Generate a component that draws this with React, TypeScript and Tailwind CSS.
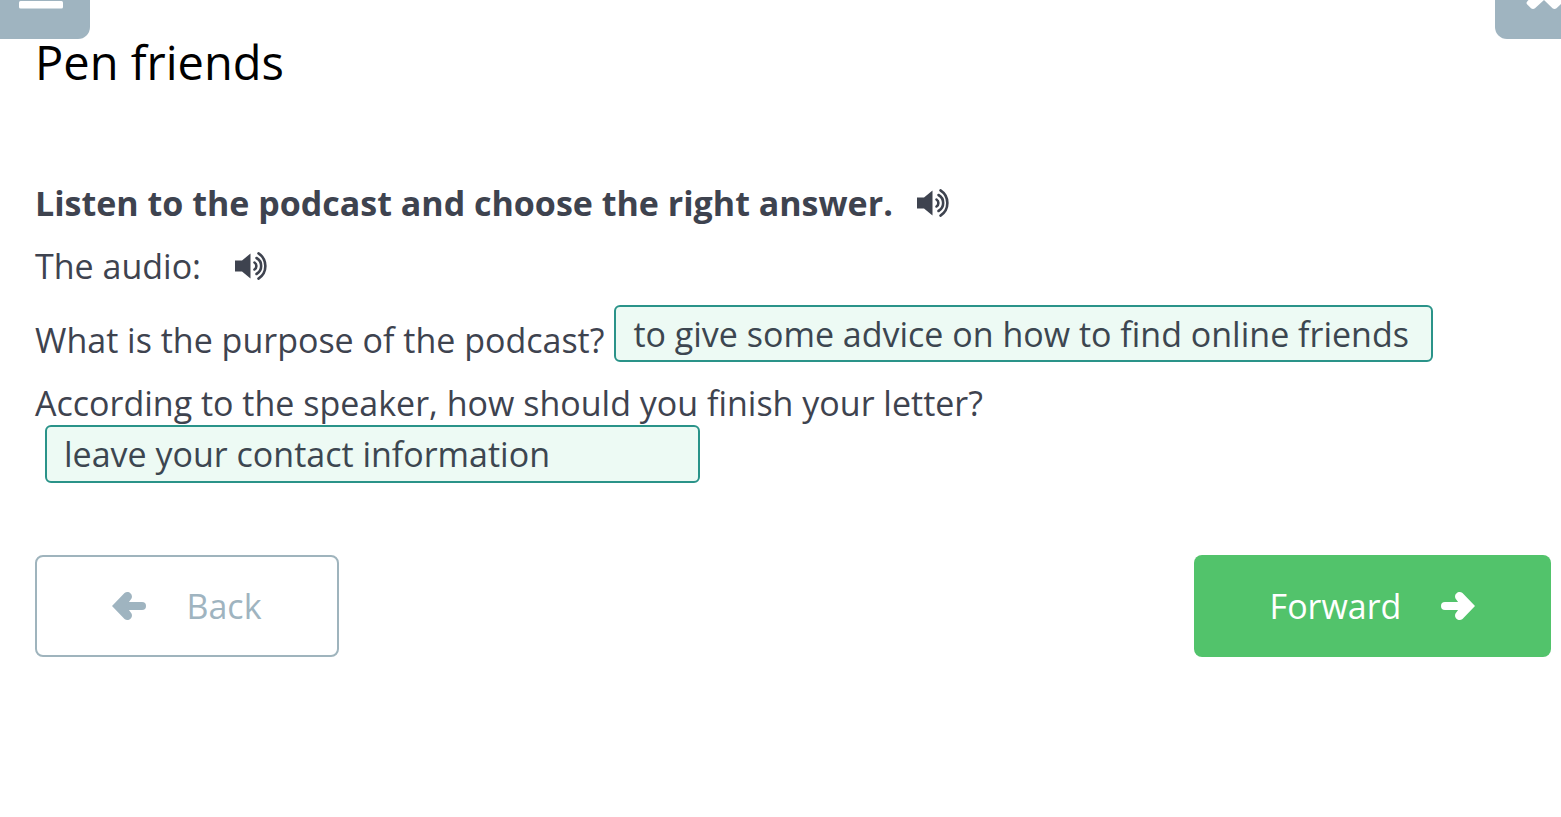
import React, { useState } from 'react'

interface QuestionProps {
  id: string
  text: string
  options: string[]
  className: string
  selectClassName: string
}

const Question: React.FC<QuestionProps> = ({ id, text, options, className, selectClassName }) => {
  const [answer, setAnswer] = useState(options[0])

  return (
    <div className={className}>
      <label htmlFor={id} className="leading-[44px]">
        {text}
      </label>
      <select
        id={id}
        value={answer}
        onChange={(e) => setAnswer(e.target.value)}
        className={`appearance-none rounded-md border-2 border-[#2a9389] bg-[#edfaf4] text-[#3c4650] ${selectClassName}`}
      >
        {options.map((option) => (
          <option key={option} value={option}>
            {option}
          </option>
        ))}
      </select>
    </div>
  )
}

const AudioButton: React.FC<{ label: string }> = ({ label }) => (
  <button type="button" aria-label={label} className="cursor-pointer">
    <svg viewBox="0 0 34 30" className="h-[30px] w-[34px]" fill="none">
      <path d="M0 9.500h7L15.500 2.500V27.500L7 20.500H0z" fill="currentColor" />
      <g stroke="currentColor" strokeWidth="2.600" strokeLinecap="round">
        <path d="M19.500 11.500a4.200 4.200 0 0 1 0 7" />
        <path d="M21.500 7a9.200 9.200 0 0 1 0 16" />
        <path d="M23.500 2.400a15 15 0 0 1 0 25.200" />
      </g>
    </svg>
  </button>
)

const ArrowIcon: React.FC<{ className?: string }> = ({ className = '' }) => (
  <svg viewBox="0 0 34 30" className={`h-[30px] w-[34px] ${className}`} fill="none">
    <path d="M4 15h20" stroke="currentColor" strokeWidth="8" strokeLinecap="round" />
    <path
      d="M14.500 7.500C12.500 3.500 17.500-1 21.500 2L34 15 21.500 28C17.500 31 12.500 26.500 14.500 22.500L20 15z"
      fill="currentColor"
    />
  </svg>
)

export default function App() {
  return (
    <div className="min-h-screen overflow-hidden bg-white font-['Open_Sans','Noto_Sans',sans-serif] text-[34px] leading-[48px] text-[#3e434f]">
      {/* Top bar, scrolled partly out of view */}
      <header className="flex justify-between">
        <button
          type="button"
          aria-label="Menu"
          className="flex h-[39px] w-[90px] items-start rounded-br-xl bg-[#9fb4c0] pl-[19px] text-white"
        >
          <svg viewBox="0 0 44 9" className="h-[9px] w-[44px]">
            <rect y="1" width="44" height="7.500" rx="1.500" fill="currentColor" />
          </svg>
        </button>
        <button
          type="button"
          aria-label="Close"
          className="flex h-[39px] w-[66px] items-start justify-end overflow-hidden rounded-bl-xl bg-[#9fb4c0] text-white"
        >
          <svg viewBox="0 0 36 12" className="h-3 w-9">
            <path
              d="M3.500 0L2 1.700q-1.200 1.300 0 2.600L6 8.300q2 1.500 4 0L19 0l8.500 8.300q2 1.500 4 0L36 4V0z"
              fill="currentColor"
            />
          </svg>
        </button>
      </header>

      <main className="pr-[10px] pl-[35px]">
        <h1 className="text-[47px] leading-[46px] text-black">Pen friends</h1>

        <div className="mt-[94px] flex items-center gap-6">
          <h2 className="font-bold">Listen to the podcast and choose the right answer.</h2>
          <AudioButton label="Play the task" />
        </div>

        <div className="mt-[15px] flex items-center gap-[34px]">
          <p>The audio:</p>
          <AudioButton label="Play the audio" />
        </div>

        <Question
          id="purpose"
          text="What is the purpose of the podcast?"
          options={['to give some advice on how to find online friends']}
          className="mt-[15px] flex flex-wrap items-end gap-x-[10px]"
          selectClassName="h-[57px] pr-[22px] pl-[17px]"
        />
        <Question
          id="ending"
          text="According to the speaker, how should you finish your letter?"
          options={['leave your contact information']}
          className="mt-[19px] flex flex-col items-start"
          selectClassName="ml-[10px] h-[58px] w-full max-w-[655px] px-[17px]"
        />

        <nav className="mt-[72px] flex justify-between">
          <button
            type="button"
            className="flex h-[102px] w-[304px] items-center justify-center gap-10 rounded-lg border-2 border-[#9fb4bd] text-[#9fb4c0]"
          >
            <ArrowIcon className="rotate-180" />
            Back
          </button>
          <button
            type="button"
            className="flex h-[102px] w-[357px] items-center justify-center gap-10 rounded-lg bg-[#52c36b] text-white"
          >
            Forward
            <ArrowIcon />
          </button>
        </nav>
      </main>
    </div>
  )
}
